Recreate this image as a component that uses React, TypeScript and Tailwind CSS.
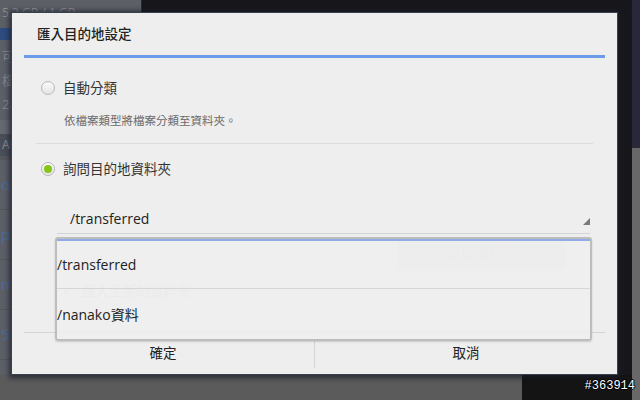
import React from "react";

const font = { fontFamily: '"Open Sans", "Noto Sans CJK TC", sans-serif' };

function Radio({ checked }: { checked?: boolean }) {
  return (
    <span className="flex h-[14px] w-[14px] items-center justify-center rounded-full border border-[#b8b8b8] bg-gradient-to-b from-[#fafafa] to-[#e4e4e4]">
      {checked && <span className="h-[8px] w-[8px] rounded-full bg-[#86c516]" />}
    </span>
  );
}

export default function App() {
  return (
    <div className="relative h-[400px] w-[640px] overflow-hidden bg-[#17171b]" style={font}>
      {/* dimmed app behind the dialog */}
      <div className="flex h-[375px]">
        <div className="flex w-[141px] flex-col overflow-hidden whitespace-nowrap bg-[#5c5f66] text-[12px]">
          <div className="h-[28px] pl-[2px] pt-[4px] text-[#8a8c92]">5.3 GB / 1 GB</div>
          <div className="h-[12px] bg-[#2e4c80]" />
          <div className="flex h-[80px] flex-col justify-center gap-[6px] pl-[2px] text-[13px] leading-[18px] text-[#85878c]">
            <span>可用空間</span>
            <span>檔案</span>
            <span>28.5</span>
          </div>
          <div className="h-[14px] bg-[#666870]" />
          <div className="flex h-[22px] items-center bg-[#4a4e58] pl-[2px] text-[#8a8c92]">ANDROID</div>
          <div className="h-[4px] bg-[#55575c]" />
          {["o3", "p3", "mp", "5c"].map((t) => (
            <div key={t} className="flex h-[50px] shrink-0 items-center border-b border-[#52545a] pl-[1px] text-[15px] text-[#4a6d9c]">
              {t}3 音樂檔案
            </div>
          ))}
        </div>
        <div className="w-px bg-[#2a2a2e]" />
        <div className="flex-1 bg-[#17171b]" />
        <div className="flex w-[8px] flex-col">
          <div className="h-[148px] bg-[#29273a]" />
          <div className="flex-1 bg-[#686868]" />
        </div>
      </div>
      <div className="flex h-[25px]">
        <div className="w-[522px] bg-[#5b5b5b]" />
        <div className="flex-1 bg-[#141414]" />
        <div className="w-[8px] bg-[#686868]" />
      </div>

      {/* dialog */}
      <div className="absolute left-[12px] top-[13px] flex h-[361px] w-[605px] flex-col bg-[#eeeeee] shadow-[0_0_0_1px_#3a404c,0_1px_5px_3px_rgba(25,30,42,0.75)]">
        <div className="flex h-[42px] items-center pl-[25px] text-[13.5px] font-medium text-[#222]">匯入目的地設定</div>
        <div className="mx-3 h-[3px] bg-[#6b9be8]" />

        <div className="relative flex flex-1 flex-col px-6">
          <div className="mt-[15px] flex h-[30px] items-center gap-[8px] pl-[5px] text-[13.5px] text-[#333]">
            <Radio />
            <span>自動分類</span>
          </div>
          <div className="mt-[8px] flex h-[20px] items-center pl-[28px] text-[11.5px] text-[#6a6a6a]">
            依檔案類型將檔案分類至資料夾。
          </div>
          <div className="mt-[12px] h-px bg-[#dcdcdc]" />
          <div className="mt-[10px] flex h-[30px] items-center gap-[8px] pl-[5px] text-[13.5px] text-[#333]">
            <Radio checked />
            <span>詢問目的地資料夾</span>
          </div>
          <div className="ml-[21px] mr-[3px] mt-[20px] flex h-[30px] items-center justify-between border-b border-[#d4d4d4] pl-[13px] text-[14px] text-[#222]">
            <span>/transferred</span>
            <svg width="7" height="7" viewBox="0 0 7 7" className="mt-[6px]">
              <path d="M7 0 L7 7 L0 7 Z" fill="#7a7a7a" />
            </svg>
          </div>
          <div className="mt-[5px] flex h-[30px] justify-end pr-[28px]">
            <div className="flex w-[167px] items-center justify-center bg-[#e2e2e2] text-[13.5px] text-[#c8c8c8]">選取資料夾</div>
          </div>
          <div className="mt-[12px] flex items-center gap-[8px] pl-[26px] text-[13.5px] text-[#c8c8c8]">
            <span className="text-[#d6e0b0]">✔</span>
            <span>匯入至新的資料夾</span>
          </div>
        </div>

        <div className="mx-3 h-px bg-[#d4d4d4]" />
        <div className="flex h-[41px] items-center text-[13.5px] text-[#222]">
          <div className="flex flex-1 justify-center">確定</div>
          <div className="h-[28px] w-px bg-[#d4d4d4]" />
          <div className="flex flex-1 justify-center">取消</div>
        </div>

        {/* dropdown popup */}
        <div className="absolute left-[43px] top-[224px] flex h-[104px] w-[537px] flex-col rounded-[3px] border-2 border-[#bdbdbd] bg-[#eeeeee]/90 text-[14px] text-[#222] shadow-[0_1px_2px_rgba(0,0,0,0.15)]">
          <div className="h-[2px] bg-[#8eade6]" />
          <div className="flex h-[47px] items-center">/transferred</div>
          <div className="h-px bg-[#d6d6d6]" />
          <div className="flex flex-1 items-center">/nanako資料</div>
        </div>
      </div>

      <div
        className="absolute bottom-[5px] right-[5px] text-[12px] text-white"
        style={{ fontFamily: '"Liberation Mono", monospace', textShadow: "1px 0 #000, -1px 0 #000, 0 1px #000, 0 -1px #000" }}
      >
        #363914
      </div>
    </div>
  );
}
